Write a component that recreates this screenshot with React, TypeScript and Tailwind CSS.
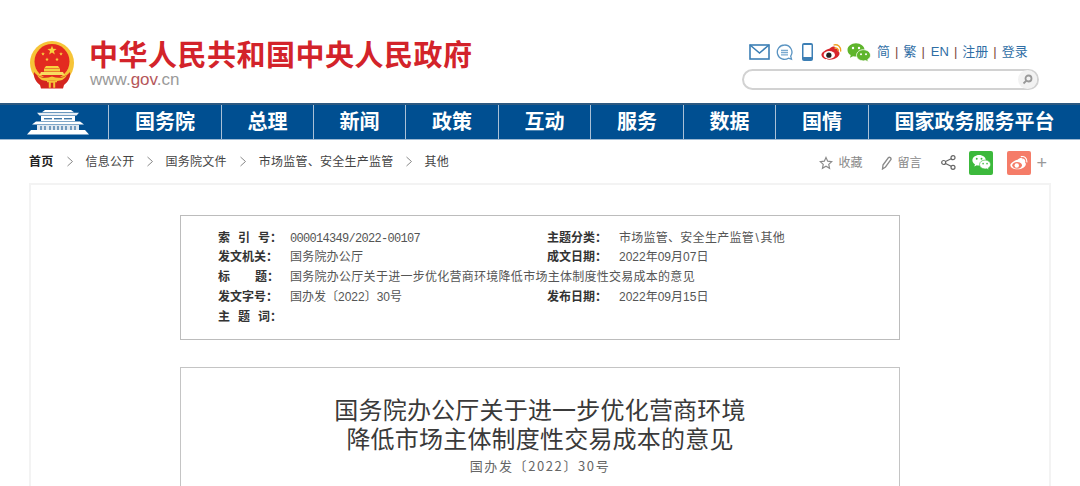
const F = "font-['Liberation_Sans','Noto_Sans_CJK_SC',sans-serif]";

function starPoints(cx: number, cy: number, r: number) {
  const pts: string[] = [];
  for (let i = 0; i < 10; i++) {
    const a = -Math.PI / 2 + (i * Math.PI) / 5;
    const q = i % 2 === 0 ? r : r * 0.42;
    pts.push(`${(cx + q * Math.cos(a)).toFixed(2)},${(cy + q * Math.sin(a)).toFixed(2)}`);
  }
  return pts.join(" ");
}

function Emblem() {
  return (
    <svg width="46" height="48" viewBox="0 0 46 48" className="shrink-0">
      <circle cx="23" cy="22" r="22" fill="#f6c437" />
      <circle cx="23" cy="20.500" r="17.500" fill="#e32a20" />
      <polygon points={starPoints(23, 9.500, 4.800)} fill="#f8d23e" />
      <polygon points={starPoints(14, 13, 1.900)} fill="#f8d23e" />
      <polygon points={starPoints(18, 18.500, 1.900)} fill="#f8d23e" />
      <polygon points={starPoints(28, 18.500, 1.900)} fill="#f8d23e" />
      <polygon points={starPoints(32, 13, 1.900)} fill="#f8d23e" />
      <path d="M17 25h12l1.500 2h-15z" fill="#f8d23e" />
      <rect x="15" y="27.500" width="16" height="3" fill="#f5cf3f" />
      <path d="M12 31h22l1.500 3h-25z" fill="#f8dc60" />
      <path d="M5 31c3 4 7 5 10 5h16c3 0 7-1 10-5 1 5-2 10-6 13l-1 3.500H12l-1-3.500C7 41 4 36 5 31z" fill="#d4251f" />
      <path d="M8 34c5 4 10 3 15 1.500C28 37 33 38 38 34c-3 6-9 6.500-13 5.500h-4c-4 1-10 .500-13-5.500z" fill="#f6c437" />
      <path d="M18 39.500h10v1.800h-1.800v5.500h-2v-5h-2.400v5h-2v-5.500H18z" fill="#f6c437" />
    </svg>
  );
}

function Gate() {
  return (
    <svg width="62" height="26" viewBox="0 0 62 26" className="shrink-0">
      <path d="M18 1H44L47 3.200H15z" fill="#fff" />
      <path d="M10 3.800H52L49.500 6.500H12.500z" fill="#e8eef4" />
      <rect x="14" y="7" width="34" height="5" fill="#fff" />
      <rect x="17" y="9" width="8" height="1.400" fill="#3f78a8" />
      <rect x="27" y="9" width="8" height="1.400" fill="#3f78a8" />
      <rect x="37" y="9" width="8" height="1.400" fill="#3f78a8" />
      <path d="M9 12.500H53L57 15.500H5z" fill="#fff" />
      <rect x="10" y="16" width="42" height="5" fill="#dfe8f0" />
      <path d="M14 17v4M18 17v4M23 17v4M27 17v4M31 17v4M35 17v4M39 17v4M44 17v4M48 17v4" stroke="#2f6a9e" strokeWidth="1.200" />
      <path d="M4 21H58L62 25.500H0z" fill="#fff" />
    </svg>
  );
}

function Mail() {
  return (
    <svg width="21" height="16" viewBox="0 0 21 16" fill="none" stroke="#3c7fb5" strokeWidth="1.600">
      <rect x="1" y="1" width="19" height="14" />
      <path d="M1 1l9.500 8L20 1" />
    </svg>
  );
}
function Chat() {
  return (
    <svg width="17" height="17" viewBox="0 0 17 17" fill="none" stroke="#5a94c2" strokeWidth="1.300">
      <path d="M8.500 1a7.200 7.200 0 1 0 4 13.200l3 1-.8-3A7.200 7.200 0 0 0 8.500 1z" />
      <path d="M5 6.500h7M5 8.700h7M5 10.900h7" stroke="#7aa9cf" />
    </svg>
  );
}
function Phone() {
  return (
    <svg width="11" height="18" viewBox="0 0 11 18">
      <rect x="0" y="0" width="11" height="18" rx="2" fill="#3c7fb5" />
      <rect x="1.500" y="2" width="8" height="12" fill="#fff" />
    </svg>
  );
}
function Weibo({ c = "#d8262c", eye = "#fff", wave = "#f0a020", w = 21 }: { c?: string; eye?: string; wave?: string; w?: number }) {
  return (
    <svg width={w} height={w * 0.85} viewBox="0 0 24 20">
      <path d="M10 6c3.500-3 7-3 6.500.5 3-1 4.500 1 3.500 3 2 1 2 6-5 8.500-6 2-14 .5-14.500-4.500C.2 10.500 6 7 10 6z" fill={c} />
      <ellipse cx="9.500" cy="13.500" rx="6.500" ry="4.500" fill={c === "#fff" ? "#f57c68" : eye} />
      <circle cx="9" cy="13.800" r="3" fill={c === "#fff" ? "#fff" : "#222"} />
      <path d="M15 2c4-1 8 2 7.500 7M16 5.500c2-.5 3.800 1 3.500 3" fill="none" stroke={wave} strokeWidth="1.600" strokeLinecap="round" />
    </svg>
  );
}
function Wechat({ c = "#5fb52c", eye = "#fff", w = 24 }: { c?: string; eye?: string; w?: number }) {
  return (
    <svg width={w} height={w * 0.85} viewBox="0 0 24 20">
      <path d="M9 1C4.300 1 .5 4 .5 7.700c0 2.100 1.200 4 3.200 5.200L3 15.500l3-1.500c1 .3 2 .4 3 .4C13.700 14.400 17.500 11.400 17.500 7.700S13.700 1 9 1z" fill={c} />
      <path d="M16.500 7.500c-3.900 0-7 2.500-7 5.600s3.100 5.600 7 5.600c.8 0 1.500-.1 2.200-.3l2.600 1.400-.6-2.400c1.700-1 2.800-2.600 2.800-4.300 0-3.100-3.100-5.600-7-5.600z" fill={c} stroke={eye} strokeWidth=".8" />
      <circle cx="6" cy="5.800" r="1.200" fill={eye} />
      <circle cx="12" cy="5.800" r="1.200" fill={eye} />
      <circle cx="14" cy="12" r="1" fill={eye} />
      <circle cx="19" cy="12" r="1" fill={eye} />
    </svg>
  );
}

function Chevron({ tight }: { tight?: boolean }) {
  return (
    <svg className={tight ? "mx-[12.5px]" : "mx-[13px]"} width="6" height="11" viewBox="0 0 6 11" fill="none" stroke="#888" strokeWidth="1">
      <path d="M.5 1l5 4.500-5 4.500" />
    </svg>
  );
}

const NAV: [string, string][] = [
  ["国务院", "w-[113px]"],
  ["总理", "w-[92px]"],
  ["新闻", "w-[92px]"],
  ["政策", "w-[93px]"],
  ["互动", "w-[92px]"],
  ["服务", "w-[93px]"],
  ["数据", "w-[92px]"],
  ["国情", "w-[93px]"],
  ["国家政务服务平台", "flex-1"],
];

function Meta({ label, children, w }: { label: React.ReactNode; children?: React.ReactNode; w: string }) {
  return (
    <div className={`flex ${w}`}>
      <div className="w-[72px] shrink-0 font-bold text-[#333]">{label}</div>
      <div className="text-[#555] whitespace-nowrap">{children}</div>
    </div>
  );
}

function Spread({ a, b, c }: { a: string; b: string; c: string }) {
  return (
    <span className="flex gap-[8px]">
      <span>{a}</span>
      <span>{b}</span>
      <span>{c}：</span>
    </span>
  );
}

export default function App() {
  return (
    <div className={`${F} w-[1080px] h-[486px] overflow-hidden bg-white`}>
      <header className="h-[103px] flex justify-between pl-[29px] pt-[38px]">
        <div className="flex gap-[14px] h-[52px]">
          <div className="pt-[3px]"><Emblem /></div>
          <div className="pt-[2px]">
            <div className="text-[29px] leading-[32px] font-bold text-[#d3232a] tracking-[0.5px] whitespace-nowrap">中华人民共和国中央人民政府</div>
            <div className="text-[17px] leading-[18px] -mt-[1px] ml-[1px] text-[#9a9a9a]">www.<span className="text-[#b5565a]">gov</span>.cn</div>
          </div>
        </div>
        <div className="w-[338px] pt-[4px]">
          <div className="flex items-center h-[20px] pl-[7px]">
            <Mail />
            <span className="ml-[6px]"><Chat /></span>
            <span className="ml-[9px]"><Phone /></span>
            <span className="ml-[8px]"><Weibo /></span>
            <span className="ml-[5px]"><Wechat /></span>
            <div className="ml-[6px] flex items-center gap-[5px] text-[13px] text-[#2f6ea5] whitespace-nowrap">
              <span>简</span><span className="text-[#7a4a3a]">|</span>
              <span>繁</span><span className="text-[#7a4a3a] mr-[1px]">|</span>
              <span>EN</span><span className="text-[#7a4a3a]">|</span>
              <span>注册</span><span className="text-[#7a4a3a]">|</span>
              <span>登录</span>
            </div>
          </div>
          <div className="mt-[7px] w-[297px] h-[21px] rounded-full border-2 border-[#d2d2d2] bg-white flex justify-end items-center">
            <div className="w-[19px] h-[19px] rounded-full bg-[#f2f2f2] flex items-center justify-center">
              <svg width="11" height="11" viewBox="0 0 11 11" fill="none" stroke="#999" strokeWidth="1.800">
                <circle cx="6.500" cy="4.500" r="3" /><path d="M4.500 6.500L1.500 9.500" />
              </svg>
            </div>
          </div>
        </div>
      </header>

      <nav className="h-[37px] bg-[#004f91] border-t-2 border-b border-t-[#2d5a82] border-b-[#9db9d2] flex text-white font-bold text-[20px]">
        <div className="w-[108px] flex items-center justify-center pl-[7px]"><Gate /></div>
        {NAV.map(([t, w]) => (
          <div key={t} className={`${w} border-l border-[#a9c0d6] flex items-center justify-center whitespace-nowrap`}>{t}</div>
        ))}
      </nav>

      <div className="h-[43px] pl-[29px] pr-[33px] flex items-center justify-between text-[12px] text-[#444]">
        <div className="flex items-center whitespace-nowrap tracking-[0.25px]">
          <span className="font-bold text-[#222]">首页</span>
          <Chevron />
          <span>信息公开</span>
          <Chevron tight />
          <span>国务院文件</span>
          <Chevron />
          <span>市场监管、安全生产监管</span>
          <Chevron tight />
          <span>其他</span>
        </div>
        <div className="flex items-center text-[#888] whitespace-nowrap mt-[2px]">
          <svg width="14" height="14" viewBox="0 0 24 24" fill="none" stroke="#8a8a8a" strokeWidth="2"><path d="M12 2.500l2.900 6.300 6.900.8-5.100 4.700 1.400 6.800L12 17.600l-6.100 3.500 1.400-6.800L2.200 9.600l6.900-.8z" /></svg>
          <span className="ml-[5px]">收藏</span>
          <svg className="ml-[19px]" width="11" height="14" viewBox="0 0 11 14" fill="none" stroke="#8a8a8a" strokeWidth="1.300"><path d="M2 9L7.500 1.500c1-.8 3 .5 2.500 2L4.500 11 1.500 13z" /></svg>
          <span className="ml-[5px]">留言</span>
          <svg className="ml-[20px]" width="15" height="15" viewBox="0 0 15 15" fill="none" stroke="#666" strokeWidth="1.200"><circle cx="2.700" cy="7.500" r="2" /><circle cx="12" cy="2.700" r="2" /><circle cx="12" cy="12.300" r="2" /><path d="M4.500 6.500L10.200 3.700M4.500 8.500l5.700 2.800" /></svg>
          <div className="ml-[13px] w-[24px] h-[24px] rounded-[2px] bg-[#3cb93c] flex items-center justify-center"><Wechat c="#fff" eye="#3cb93c" w={19} /></div>
          <div className="ml-[14px] w-[24px] h-[24px] rounded-[2px] bg-[#f57c68] flex items-center justify-center"><Weibo c="#fff" wave="#fff" w={18} /></div>
          <span className="ml-[5px] text-[18px] leading-none text-[#999]">+</span>
        </div>
      </div>

      <main className="mx-[29px] h-[400px] border-2 border-[#f3f3f3] px-[149px] pt-[30px] w-[1022px]">
        <section className="w-[720px] h-[125px] border border-[#bcbcbc] pt-[12px] pl-[37px] text-[12px] leading-[20px]">
          <div className="flex h-[19px]"><Meta w="w-[329px]" label={<Spread a="索" b="引" c="号" />}><span className="font-['Liberation_Mono','Noto_Sans_CJK_SC',monospace] tracking-[-0.7px]">000014349/2022-00107</span></Meta><Meta w="w-[300px]" label="主题分类："><span className="tracking-[0.27px]">市场监管、安全生产监管<span className="px-[1.5px]">\</span>其他</span></Meta></div>
          <div className="flex h-[20px]"><Meta w="w-[329px]" label="发文机关："><span className="tracking-[0.2px]">国务院办公厅</span></Meta><Meta w="w-[300px]" label="成文日期：">2022年09月07日</Meta></div>
          <div className="flex h-[20px]"><Meta w="w-[600px]" label={<span className="flex justify-between w-[61px]"><span>标</span><span>题：</span></span>}><span className="tracking-[0.27px]">国务院办公厅关于进一步优化营商环境降低市场主体制度性交易成本的意见</span></Meta></div>
          <div className="flex h-[20px]"><Meta w="w-[329px]" label="发文字号：">国办发〔2022〕30号</Meta><Meta w="w-[300px]" label="发布日期：">2022年09月15日</Meta></div>
          <div className="flex h-[20px]"><Meta w="w-[329px]" label={<Spread a="主" b="题" c="词" />} /></div>
        </section>
        <section className="mt-[27px] w-[720px] h-[200px] border border-[#c4c4c4] pt-[26px] text-center font-['Noto_Sans_CJK_SC',serif] text-[#444]">
          <div className="text-[24px] leading-[29px] text-[#3a3a3a] tracking-[0.2px]">国务院办公厅关于进一步优化营商环境<br />降低市场主体制度性交易成本的意见</div>
          <div className="text-[13px] leading-[18px] mt-[5px] text-[#666] tracking-[1.600px]">国办发〔2022〕30号</div>
        </section>
      </main>
    </div>
  );
}
